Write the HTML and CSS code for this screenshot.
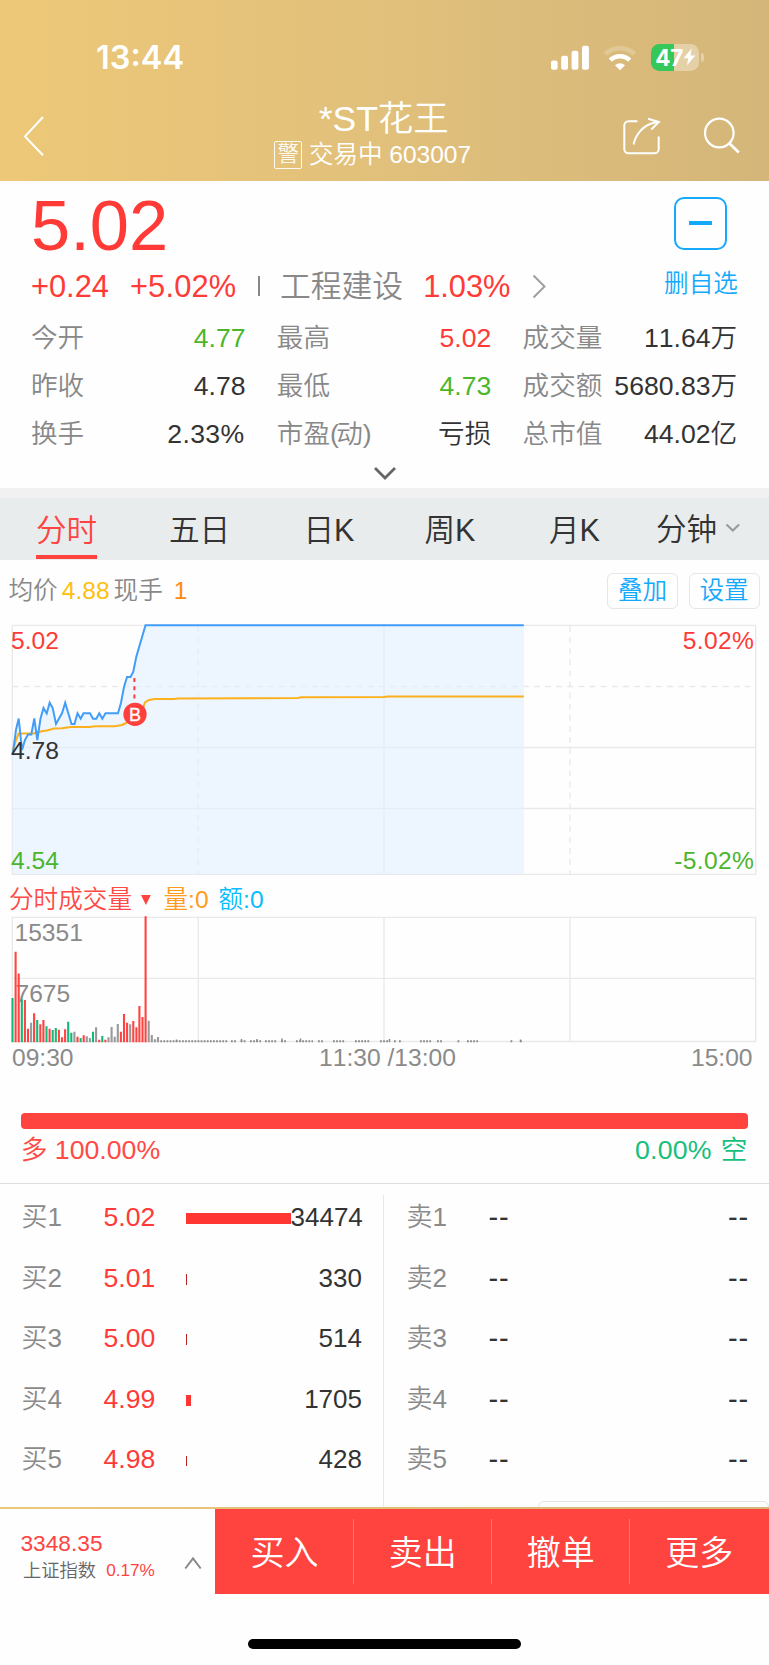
FILE: index.html
```html
<!DOCTYPE html>
<html lang="zh-CN">
<head>
<meta charset="utf-8">
<title>*ST花王 603007</title>
<link rel="stylesheet" href="styles.css">
</head>
<body>
<header class="top">
  <div class="status">
    <span class="clock">13:44</span>
    <svg class="signal" width="40" height="26" viewBox="0 0 40 26" fill="#fff"><rect x="1" y="15.5" width="6.6" height="9.3" rx="2"/><rect x="11.2" y="10.7" width="6.8" height="14.1" rx="2"/><rect x="21.6" y="5.7" width="6.8" height="19.1" rx="2"/><rect x="32" y="0.7" width="6.9" height="24.1" rx="2"/></svg>
    <svg class="wifi" width="34" height="26" viewBox="0 0 34 26" fill="none" stroke="#fff"><path d="M2.4 9.2a21 21 0 0 1 29.2 0" stroke-width="4.6" opacity=".22"/><path d="M7.3 15.2a14 14 0 0 1 19.4 0" stroke-width="4.6"/><path d="M17 25.200l-5-5a7.200 7.200 0 0 1 10 0z" fill="#fff" stroke="none"/></svg>
    <div class="battery"><span>47</span><svg width="13" height="18" viewBox="0 0 13 18"><path d="M8.600.5.6 10.200h4.700L4 17.200l8.300-9.800H7.600z" fill="#fff"/></svg></div><i class="nub"></i>
  </div>
  <nav class="nav">
    <svg class="back" width="24" height="44" viewBox="0 0 24 44"><path d="M21 3 3 22.400l18 18.800" fill="none" stroke="#fff" stroke-width="2"/></svg>
    <div class="heading"><h1>*ST花王</h1><p><b>警</b><span>交易中 603007</span></p></div>
    <svg class="tools" width="120" height="44" viewBox="621 113 120 44" fill="none" stroke="#fff" stroke-width="2"><path d="M637.500 121.200h-9a4.200 4.200 0 0 0-4.200 4.200v23.600a4.200 4.200 0 0 0 4.200 4.200h26a4.200 4.200 0 0 0 4.200-4.200v-12.500M633.500 144.500c2.500-11 11-21.500 25.200-22.500M648 118.800l10.900 3.200-7.700 7.500"/><circle cx="719.300" cy="133" r="14.300" stroke-width="2.200"/><path d="m729.300 143.200 9.500 9.300" stroke-width="2.800"/></svg>
  </nav>
</header>

<section class="quote">
  <div class="quote-main">
    <div>
      <div class="price">5.02</div>
      <div class="change"><span class="red">+0.24</span><span class="red pct">+5.02%</span><i></i><span class="gray">工程建设</span><span class="red sector">1.03%</span><svg width="15" height="25" viewBox="0 0 15 25"><path d="m1.500 1.500 11 11-11 11" fill="none" stroke="#a0a0a0" stroke-width="2"/></svg></div>
    </div>
    <div class="watch"><div class="minus"><i></i></div><span>删自选</span></div>
  </div>
  <dl class="stats">
    <div><dt>今开</dt><dd class="green">4.77</dd></div><div><dt>最高</dt><dd class="red">5.02</dd></div><div><dt>成交量</dt><dd>11.64万</dd></div>
    <div><dt>昨收</dt><dd>4.78</dd></div><div><dt>最低</dt><dd class="green">4.73</dd></div><div><dt>成交额</dt><dd>5680.83万</dd></div>
    <div><dt>换手</dt><dd class="wide turn">2.33%</dd></div><div><dt>市盈<span class="paren">(</span>动<span class="paren">)</span></dt><dd>亏损</dd></div><div><dt>总市值</dt><dd>44.02亿</dd></div>
  </dl>
  <svg class="more" width="24" height="16" viewBox="0 0 24 16"><path d="m2 2 10 10L22 2" fill="none" stroke="#666" stroke-width="2.800"/></svg>
</section>

<nav class="tabs"><a class="on"><span>分时</span></a><a>五日</a><a>日K</a><a>周K</a><a>月K</a><a class="minute">分钟<svg width="16" height="10" viewBox="0 0 16 10"><path d="m1.500 1.500 6.300 6 6.300-6" fill="none" stroke="#999" stroke-width="2"/></svg></a></nav>

<div class="legend"><span>均价</span><span class="avg">4.88</span><span>现手</span><span class="hand">1</span><button class="first">叠加</button><button>设置</button></div>

<svg class="chart" width="769" height="266" viewBox="0 615 769 266">
  <path d="M12.300 625.300H755.700V874.300H12.300zM12.300 747.500H755.700M12.300 808.500H755.700M384 625V874" class="grid"/>
  <path d="M12.300 686.500H750" class="grid" stroke-dasharray="6 5.100"/>
  <path d="M198.300 626V874M570 626V874" class="grid" stroke-dasharray="6 5.100"/>
  <path class="area" d="M12.300 874.300V755L16 729.700 18.700 718.500 22 750 25 740 28 734.500H31.300L34.300 718.500 37.300 740 40.500 718.500 43.500 708 46.700 713.500 49.700 702.700 52.700 708 56 724 59 718.500 62 713.300 65.200 702.700 68.300 713.300 71.500 724H74.500L77.500 713.300 80.700 718.700 83.500 713.300H90L93 718.700H96.300L99.300 713.300 102.300 718.700 105.500 713.300H118L121 702.700 124 687 127 677H130.500L133.300 671.700 136.300 656.700 145.500 625.300H523.800V874.300z"/>
  <path d="M12.700 751 16 740 18.700 733.500 33 733.500 37 732.500 43 731 47 730.500 54 728.500 62 728.300 71 727H90L95 726.300H115L122 725 130 721 140 716 145 702.500 149 700 155 699H174L178 698.400 250 698.200 298 697.900 301 697.300 384 697 388 696.600H523.800" fill="none" stroke="#fbb01c" stroke-width="2"/>
  <path d="M12.700 755 16 729.700 18.700 718.500 22 750 25 740 28 734.500H31.300L34.300 718.500 37.300 740 40.500 718.500 43.500 708 46.700 713.500 49.700 702.700 52.700 708 56 724 59 718.500 62 713.300 65.200 702.700 68.300 713.300 71.500 724H74.500L77.500 713.300 80.700 718.700 83.500 713.300H90L93 718.700H96.300L99.300 713.300 102.300 718.700 105.500 713.300H118L121 702.700 124 687 127 677H130.500L133.300 671.700 136.300 656.700 145.500 625.300H523.800" fill="none" stroke="#429df7" stroke-width="2"/>
  <path d="M134.400 678V700" stroke="#ff3b3a" stroke-width="2" stroke-dasharray="4 4.200"/>
  <circle cx="135" cy="714.300" r="11.600" fill="#ff3f3d"/>
  <text class="marker" x="135" y="721" text-anchor="middle">B</text>
  <text class="up" x="11" y="649.300">5.02</text><text class="mid" x="11" y="759">4.78</text><text class="down" x="11" y="869.300">4.54</text>
  <text class="up wide" x="754.300" y="649.300" text-anchor="end">5.02%</text><text class="down wide" x="754.300" y="869.300" text-anchor="end">-5.02%</text>
</svg>

<div class="vol-head"><span class="name">分时成交量</span><svg width="10" height="11" viewBox="0 0 10 11"><path d="M0 0h9.800L4.900 10z" fill="#ff433f"/></svg><span class="qty">量:0</span><span class="amt">额:0</span></div>

<svg class="chart" width="769" height="166" viewBox="0 913 769 166">
  <path d="M12.300 917.300H755.700V1041.500H12.300zM12.300 978.300H755.700M198.300 917V1041M384 917V1041M570 917V1041" class="grid"/>
  <text class="label" x="14.500" y="940.700">15351</text><text class="label" x="15.500" y="1001.700">7675</text>
  <g fill="none" stroke-width="2.100">
    <path stroke="#12b87a" d="M12.500 1042.300V998M21.800 1042.300V999.300M37.200 1042.300V1020M46.500 1042.300V1026.300M52.700 1042.300V1030M55.800 1042.300V1028M68.200 1042.300V1021.700M71.300 1042.300V1032.700M80.600 1042.300V1038M93 1042.300V1031.700M102.300 1042.300V1036"/>
    <path stroke="#ff4341" d="M15.600 1042.300V951.700M18.700 1042.300V973.500M24.900 1042.300V1000M28 1042.300V1028.700M34.100 1042.300V1013.300M40.300 1042.300V1024.300M43.400 1042.300V1020M49.600 1042.300V1028.700M58.900 1042.300V1029.700M62 1042.300V1037.300M65.100 1042.300V1029.300M77.500 1042.300V1036.700M83.700 1042.300V1035.300M99.200 1042.300V1039.700M105.400 1042.300V1039.700M120.900 1042.300V1031.700M124 1042.300V1014M127.100 1042.300V1022.700M133.300 1042.300V1021M136.400 1042.300V1027.300M139.400 1042.300V1006M142.500 1042.300V1017M145.600 1042.300V916.300"/>
    <path stroke="#999" d="M31.100 1042.300V1022.700M74.400 1042.300V1031.700M86.800 1042.300V1036.300M89.900 1042.300V1038M96.100 1042.300V1027.300M108.500 1042.300V1037.300M111.600 1042.300V1027M114.700 1042.300V1036.700M117.800 1042.300V1024M130.200 1042.300V1024.300M148.700 1042.300V1020.700M151.800 1042.300V1035M154.900 1042.300V1039.300M158 1042.300V1037"/>
    <path stroke="#8a8a8a" stroke-width="2" stroke-dasharray="1.800 1.300" d="M160.300 1041.300H228M231 1041.300H237M240.600 1041.300H246M250 1041.300H261.500M265 1041.300H277M281 1041.300H286M296 1041.300H313M318 1041.300H323.500M333 1041.300H345M355 1041.300H370M380 1041.300H390M394 1041.300H396M399 1041.300H401M420 1041.300H432M437 1041.300H443M457.500 1041.300H460M467 1041.300H478M510.500 1041.300H513M520 1041.300H522"/>
    <path stroke="#8a8a8a" stroke-width="1.500" d="M176.500 1042V1039.500M241.500 1042V1039M257 1042V1039M282 1042V1038.500M300.500 1042V1038.500M389.500 1042V1039M520.500 1042V1039.500"/>
  </g>
  <text class="label" x="12" y="1065.700">09:30</text><text class="label" x="387.500" y="1065.700" text-anchor="middle">11:30 /13:00</text><text class="label" x="752.500" y="1065.700" text-anchor="end">15:00</text>
</svg>

<section class="ratio"><div class="ratio-bar"></div><div class="ratio-text"><span class="long">多 100.00%</span><span class="short">0.00% 空</span></div></section>

<section class="book">
  <div class="side buy">
    <div class="row"><span class="lv">买1</span><span class="pr">5.02</span><i style="width:105px"></i><span class="n">34474</span></div>
    <div class="row"><span class="lv">买2</span><span class="pr">5.01</span><i class="thin" style="width:1px"></i><span class="n">330</span></div>
    <div class="row"><span class="lv">买3</span><span class="pr">5.00</span><i class="thin" style="width:1px"></i><span class="n">514</span></div>
    <div class="row"><span class="lv">买4</span><span class="pr">4.99</span><i style="width:5px"></i><span class="n">1705</span></div>
    <div class="row"><span class="lv">买5</span><span class="pr">4.98</span><i class="thin" style="width:1px"></i><span class="n">428</span></div>
  </div>
  <div class="side sell">
    <div class="row"><span class="lv">卖1</span><span class="none">--</span><span class="none">--</span></div>
    <div class="row"><span class="lv">卖2</span><span class="none">--</span><span class="none">--</span></div>
    <div class="row"><span class="lv">卖3</span><span class="none">--</span><span class="none">--</span></div>
    <div class="row"><span class="lv">卖4</span><span class="none">--</span><span class="none">--</span></div>
    <div class="row"><span class="lv">卖5</span><span class="none">--</span><span class="none">--</span></div>
    <div class="peek"></div>
  </div>
</section>

<footer class="bar">
  <div class="index"><div><p class="pts">3348.35</p><p class="idx"><span>上证指数</span><em>0.17%</em></p></div><svg width="18" height="14" viewBox="0 0 18 14"><path d="m1.300 12.500 7.700-10 7.700 10" fill="none" stroke="#888" stroke-width="2"/></svg></div>
  <a>买入</a><a>卖出</a><a>撤单</a><a>更多</a>
</footer>
<div class="home"></div>
</body>
</html>
```

FILE: styles.css
```css
* { box-sizing: border-box; margin: 0; padding: 0; }
body { width: 769px; height: 1665px; overflow: hidden; background: #fefefe; color: #333; font-family: "Liberation Sans", "Noto Sans CJK SC", sans-serif; font-weight: 350; font-size: 26.6px; font-kerning: none; white-space: nowrap; }
svg { display: block; flex: none; }
i, em { font-style: normal; }
.red { color: #ff3a37; }
.green { color: #4cb52c; }
.gray { color: #888; }
.wide { letter-spacing: .35px; }

/* header */
.top { height: 180.600px; background: linear-gradient(90deg, #edc878 0%, #e1c07b 50%, #d4b67a 100%); color: #fff; }
.status { height: 92px; padding-top: 37px; display: flex; align-items: flex-start; }
.clock { width: 454px; margin-left: 96px; font: 600 32.500px/41px Inter, sans-serif; }
.signal { margin-top: 7.500px; }
.wifi { margin: 7.500px 0 0 13px; }
.battery { width: 48.500px; height: 27.300px; margin: 6.500px 0 0 13.700px; padding-left: 4.500px; border-radius: 8.500px; background: linear-gradient(90deg, #34c759 47%, rgba(255,255,255,.35) 47%); display: flex; align-items: center; font: 700 22.500px/27px Inter, sans-serif; letter-spacing: -.2px; }
.nub { width: 3px; height: 9px; margin: 16px 0 0 2px; border-radius: 0 4px 4px 0; background: rgba(255,255,255,.35); }
.nav { position: relative; height: 88px; display: flex; justify-content: space-between; padding: 0 28px 0 22px; }
.back { margin-top: 22px; }
.tools { margin-top: 21px; }
.heading { position: absolute; left: 0; right: 0; top: 0; text-align: center; pointer-events: none; }
.heading h1 { font-weight: inherit; font-size: 35.500px; line-height: 44px; padding-top: 4.500px; margin-left: -1.500px; }
.heading p { display: flex; justify-content: center; align-items: center; height: 28px; font-size: 24.500px; margin-left: -24px; margin-top: .5px; }
.heading b { width: 28.500px; height: 28.500px; border: 1.500px solid #fff; border-radius: 2px; font-weight: inherit; font-size: 21.500px; line-height: 25px; margin-right: 6.500px; opacity: .9; }
.heading span { line-height: 30px; }

/* quote */
.quote { height: 307.400px; }
.quote-main { display: flex; justify-content: space-between; height: 133.400px; padding: 0 31px 0 31px; }
.price { height: 89px; font-size: 70.500px; line-height: 89px; color: #ff3a37; }
.change { display: flex; align-items: center; height: 33px; font-size: 30.800px; line-height: 33px; }
.change .pct { margin-left: 21px; letter-spacing: .2px; }
.change i { width: 1.500px; height: 20px; margin: 0 20px 0 22px; background: #888; }
.change .sector { margin: 0 22px 0 20px; }
.watch { width: 74px; padding-top: 16.400px; display: flex; flex-direction: column; align-items: center; color: #14a9fd; font-size: 24.600px; }
.minus { width: 53px; height: 53px; margin-right: 1px; border: 2px solid #14a9fd; border-radius: 10px; display: flex; align-items: center; justify-content: center; }
.minus i { width: 23px; height: 4px; background: #14a9fd; }
.watch span { margin-top: 18.500px; line-height: 32px; }
.stats { display: grid; grid-template-columns: repeat(3, 214.500px); column-gap: 31.300px; padding-left: 31px; }
.stats div { display: flex; justify-content: space-between; height: 48px; line-height: 49px; }
.stats dt { color: #888; }
.stats .turn { margin-right: 1px; }
.paren { margin-right: -2.600px; }
.more { margin: 8px auto 0; }

/* tabs */
.tabs { height: 71.700px; border-top: 10.500px solid #f1f1f1; background: #e8ecec; display: grid; grid-template-columns: 133px 133px 126px 116px 133px 128px; font-size: 30.600px; line-height: 65px; text-align: center; }
.tabs .on { color: #ff433f; display: flex; justify-content: center; }
.tabs .on span { height: 61.200px; border-bottom: 4.200px solid #ff433f; }
.tabs .minute { display: flex; align-items: center; padding-left: 15px; height: 63px; }
.minute svg { margin: -2px 0 0 8px; }

/* chart legend */
.legend { height: 55.300px; padding: 7px 9.500px 0 8.500px; display: flex; align-items: center; font-size: 24.600px; line-height: 34px; color: #888; }
.legend .avg { color: #fdc010; margin: 0 4px; }
.legend .hand { color: #ff8a10; margin-left: 11px; }
.legend button { width: 71px; height: 36.500px; border: 1.500px solid #e6e6e6; border-radius: 6px; background: #fefefe; color: #14a9fd; font: inherit; line-height: 34px; }
.legend .first { margin: 0 10.500px 0 auto; }

/* charts */
.chart { font-size: 24.600px; }
.grid { fill: none; stroke: #e9e9e9; stroke-width: 1.300; }
.area { fill: rgba(225,239,253,.6); }
.marker { fill: #fff; stroke: #fff; stroke-width: .3; font-size: 18px; }
.up { fill: #ff3a37; }
.down { fill: #4cb52c; }
.mid { fill: #333; }
.label { fill: #8a8a8a; }
.vol-head { height: 32px; padding: 6px 0 0 9px; display: flex; align-items: center; line-height: 30px; font-size: 24.600px; }
.vol-head .name { color: #ff4a46; }
.vol-head svg { margin: 2px 12.500px 0 9px; }
.vol-head .qty { color: #ff9c20; width: 55px; }
.vol-head .amt { color: #06bdff; }

/* long / short ratio */
.ratio { height: 104.800px; border-bottom: 1.300px solid #dedede; padding: 34.300px 21.300px 0 20.700px; }
.ratio-bar { height: 16px; border-radius: 4px; background: #ff433f; }
.ratio-text { display: flex; justify-content: space-between; line-height: 43px; font-size: 26.700px; }
.long { color: #ff4a46; }
.short { color: #16bf7c; word-spacing: 1.500px; letter-spacing: .2px; }

/* order book */
.book { height: 323.200px; padding-top: 11px; display: grid; grid-template-columns: 384px 385px; overflow: hidden; }
.side { line-height: 46px; }
.buy { border-right: 1.300px solid #e8e8e8; }
.row { display: grid; align-items: center; height: 60.600px; transform: translateY(-8px); }
.buy .row { grid-template-columns: 82px 82px 105px 1fr; padding: 0 21px 0 21.500px; }
.sell .row { grid-template-columns: 82px 1fr auto; padding: 0 20px 0 22.500px; }
.lv { color: #8a8a8a; font-size: 26px; }
.pr { color: #ff3a37; }
.row i { height: 10.700px; margin-top: 3px; background: #ff3632; }
.row i.thin { background: #b82424; }
.n { font-size: 26px; text-align: right; }
.none { font-size: 29px; letter-spacing: .8px; }
.peek { height: 20px; margin: 3px 0 0 154px; border: 1.300px solid #e3e3e3; border-radius: 6px; }

/* bottom bar */
.bar { height: 87.500px; border-top: 2px solid; border-image: linear-gradient(90deg, #edc878, #d4b67a) 1; display: grid; grid-template-columns: 215px 138px 138px 138px 140px; grid-template-rows: 85.500px; }
.bar a { background: #ff433f; color: #fff; font-size: 34px; line-height: 60px; text-align: center; display: flex; align-items: center; justify-content: center; padding: 2px 0 0 1px; }
.bar a + a { padding-left: 0; }
.bar a:last-child { padding-right: 1px; }
.bar a + a::before { content: ""; width: 1.300px; height: 65px; margin-top: -2px; background: rgba(255,255,255,.25); margin-right: auto; }
.bar a + a::after { content: ""; width: 0; margin-left: auto; }
.index { display: flex; justify-content: space-between; padding: 20px 13.500px 0 20.500px; }
.pts { color: #ff4341; font-size: 22.700px; line-height: 28px; }
.idx { display: flex; line-height: 26px; font-size: 18.300px; color: #666; padding-left: 2.500px; }
.idx span { padding-top: 1px; }
.idx em { margin-left: 10px; font-size: 17.200px; color: #ff4341; }
.index svg { margin-top: 27px; }
.home { width: 273.500px; height: 10px; margin: 44.500px 0 0 247.500px; border-radius: 5px; background: #000; }
```
